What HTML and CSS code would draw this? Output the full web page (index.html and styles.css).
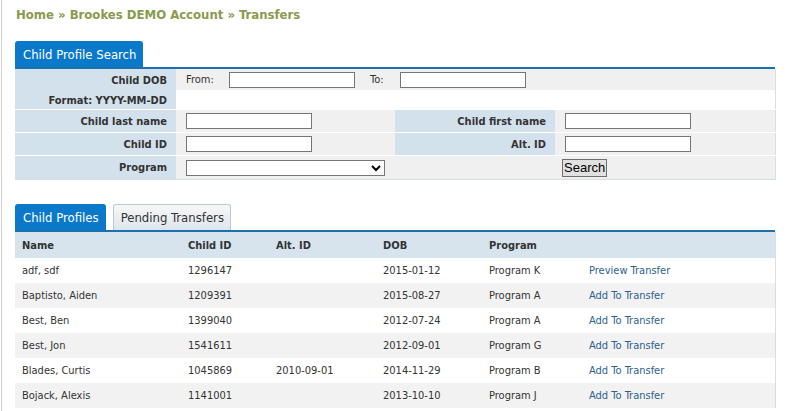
FILE: index.html
```html
<!DOCTYPE html>
<html>
<head>
<meta charset="utf-8">
<link rel="stylesheet" href="styles.css">
</head>
<body>
<div class="page">
  <div class="crumbs">Home » Brookes DEMO Account » Transfers</div>

  <div class="tabs">
    <div class="tab active">Child Profile Search</div>
  </div>
  <table class="search">
    <colgroup><col class="c1"><col class="c2"><col class="c3"><col class="c4"></colgroup>
    <tr class="r-dob">
      <th class="lbl" rowspan="2"><div class="dob-l1">Child DOB</div><div class="dob-l2">Format: YYYY-MM-DD</div></th>
      <td colspan="3" class="val">
        <div class="dobrow"><span class="from">From:</span><input class="inp" type="text"><span class="to">To:</span><input class="inp" type="text"></div>
      </td>
    </tr>
    <tr class="r-fmt"><td colspan="3" class="blank"></td></tr>
    <tr class="r-std">
      <th class="lbl">Child last name</th>
      <td class="val"><input class="inp" type="text"></td>
      <th class="lbl">Child first name</th>
      <td class="val"><input class="inp" type="text"></td>
    </tr>
    <tr class="r-std">
      <th class="lbl">Child ID</th>
      <td class="val"><input class="inp" type="text"></td>
      <th class="lbl">Alt. ID</th>
      <td class="val"><input class="inp" type="text"></td>
    </tr>
    <tr class="r-last">
      <th class="lbl">Program</th>
      <td colspan="2" class="val"><select class="sel"><option></option></select></td>
      <td class="val btncell"><button class="btn">Search</button></td>
    </tr>
  </table>

  <div class="tabs tabs2">
    <div class="tab active">Child Profiles</div>
    <div class="tab">Pending Transfers</div>
  </div>
  <table class="list">
    <colgroup><col class="d1"><col class="d2"><col class="d3"><col class="d4"><col class="d5"><col class="d6"></colgroup>
    <tr class="head"><th>Name</th><th>Child ID</th><th>Alt. ID</th><th>DOB</th><th>Program</th><th></th></tr>
    <tr><td>adf, sdf</td><td>1296147</td><td></td><td>2015-01-12</td><td>Program K</td><td><a href="#">Preview Transfer</a></td></tr>
    <tr class="alt"><td>Baptisto, Aiden</td><td>1209391</td><td></td><td>2015-08-27</td><td>Program A</td><td><a href="#">Add To Transfer</a></td></tr>
    <tr><td>Best, Ben</td><td>1399040</td><td></td><td>2012-07-24</td><td>Program A</td><td><a href="#">Add To Transfer</a></td></tr>
    <tr class="alt"><td>Best, Jon</td><td>1541611</td><td></td><td>2012-09-01</td><td>Program G</td><td><a href="#">Add To Transfer</a></td></tr>
    <tr><td>Blades, Curtis</td><td>1045869</td><td>2010-09-01</td><td>2014-11-29</td><td>Program B</td><td><a href="#">Add To Transfer</a></td></tr>
    <tr class="alt"><td>Bojack, Alexis</td><td>1141001</td><td></td><td>2013-10-10</td><td>Program J</td><td><a href="#">Add To Transfer</a></td></tr>
  </table>
</div>
</body>
</html>
```
FILE: styles.css
```css
html, body {
  margin: 0;
  padding: 0;
  background: #fff;
}
body {
  font-family: "DejaVu Sans Condensed", "DejaVu Sans", sans-serif;
  font-size: 11px;
  color: #333;
}
.page {
  margin-left: 1px;
  border-left: 1px solid #d0d0d0;
  padding-left: 13px;
  width: 760px;
  min-height: 411px;
  box-sizing: content-box;
}
.crumbs {
  color: #8a9a4e;
  font-weight: bold;
  font-size: 13px;
  padding-top: 7px;
  height: 41px;
  box-sizing: border-box;
  padding-left: 1px;
}
.tabs {
  display: flex;
  gap: 7px;
  border-bottom: 2px solid #1c70ad;
  height: 26px;
  padding-top: 0;
}
.tabs2 {
  margin-top: 24px;
}
.tab {
  height: 26px;
  box-sizing: border-box;
  padding: 0 6px 0 7px;
  line-height: 25px;
  font-size: 13px;
  color: #333;
  border-radius: 3px 3px 0 0;
  border: 1px solid #b8c8d6;
  border-bottom: none;
  background: linear-gradient(#f7f7f7, #dde6ee);
}
.tab.active {
  background: #0a79c9;
  border-color: #0a79c9;
  color: #fff;
}
.search {
  width: 760px;
  border-collapse: collapse;
  table-layout: fixed;
  border-right: 1px solid #d2e0eb;
  border-bottom: 1px solid #d2e0eb;
}
.c1 { width: 161px; }
.c2 { width: 219px; }
.c3 { width: 160px; }
.c4 { width: 220px; }
.search th, .search td {
  padding: 0;
  vertical-align: middle;
}
.lbl {
  background: #d3e1ec;
  text-align: right;
  font-weight: bold;
  color: #333;
  padding-right: 9px !important;
  white-space: nowrap;
}
.val {
  background: #f0f0f0;
  padding-left: 10px !important;
}
.r-dob > td { height: 21px; }
.r-fmt > td { height: 19px; background: #fff; }
.dob-l1 { height: 22px; line-height: 24px; }
.dob-l2 { height: 18px; line-height: 20px; }
.r-dob th { border-bottom: 1px solid #fff; }
.r-std th, .r-std td { height: 22px; border-bottom: 1px solid #fff; }
.r-fmt td { border-bottom: 1px solid #fff; }
.r-last th, .r-last td { height: 23px; }
.dobrow {
  display: flex;
  align-items: center;
}
.from { width: 43px; }
.to { margin-left: 15px; width: 30px; }
.inp {
  width: 126px;
  height: 16px;
  box-sizing: border-box;
  border: 1px solid #767676;
  margin: 0;
  padding: 0 2px;
  background: #fff;
  display: block;
}
.sel {
  width: 199px;
  height: 16px;
  box-sizing: border-box;
  border: 1px solid #767676;
  margin: 0;
  padding: 0;
  background: #fff;
  display: block;
  font-size: 11px;
}
.btncell { padding-left: 7px !important; }
.btn {
  font-family: "Liberation Sans", Arial, sans-serif;
  font-size: 13px;
  height: 18px;
  padding: 0 1px;
  border: 1px solid #6f6f6f;
  background: #e1e1e1;
  color: #000;
  line-height: 14px;
  display: block;
  border-radius: 0;
}
.list {
  width: 760px;
  border-collapse: collapse;
  table-layout: fixed;
  border-right: 1px solid #d2e0eb;
}
.d1 { width: 166px; }
.d2 { width: 88px; }
.d3 { width: 107px; }
.d4 { width: 106px; }
.d5 { width: 100px; }
.d6 { width: 193px; }
.list th, .list td {
  text-align: left;
  padding: 0 0 0 7px;
  height: 25px;
  white-space: nowrap;
}
.list .head th {
  background: #d7e4ee;
  font-weight: bold;
  height: 26px;
}
.list tr.alt td { background: #f2f2f2; }
.list a {
  color: #2d5f8e;
  text-decoration: none;
}
```
